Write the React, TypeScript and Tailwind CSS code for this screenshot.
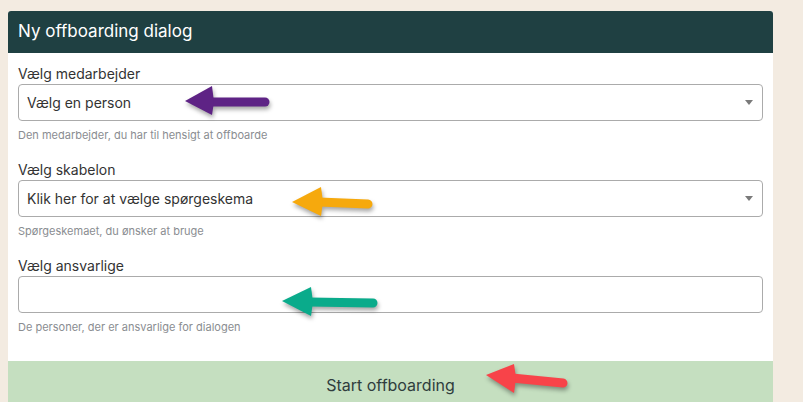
import React from "react";

type Arrow = {
  color: string;
  tip: [number, number];
  base: number; // x of head base
  top: number;
  bottom: number;
  tail: [number, number];
  baseY: number;
};

/* ────────── pil-annotation ────────── */
function ArrowMark({ a }: { a: Arrow }) {
  const shaftY = a.baseY;
  return (
    <svg
      className="absolute left-0 top-0 pointer-events-none"
      width={803}
      height={402}
      style={{ filter: "drop-shadow(1px 3px 2px rgba(0,0,0,0.35))" }}
    >
      <line
        x1={a.base - 2}
        y1={shaftY}
        x2={a.tail[0]}
        y2={a.tail[1]}
        stroke={a.color}
        strokeWidth={9}
        strokeLinecap="round"
      />
      <polygon
        points={`${a.tip[0]},${a.tip[1]} ${a.base},${a.top} ${a.base + 2},${shaftY} ${a.base},${a.bottom}`}
        fill={a.color}
      />
    </svg>
  );
}

const arrows: Arrow[] = [
  { color: "#5e2385", tip: [185, 101], base: 212, top: 86, bottom: 115, baseY: 102, tail: [265, 102] },
  { color: "#f6a90d", tip: [292, 202], base: 321, top: 187, bottom: 216, baseY: 202, tail: [368, 204] },
  { color: "#0aab8b", tip: [282, 301], base: 311, top: 287, bottom: 316, baseY: 302, tail: [373, 303] },
  { color: "#f84349", tip: [486, 375], base: 514, top: 364, bottom: 393, baseY: 378, tail: [563, 383] },
];

function Field({
  label,
  placeholder,
  help,
  select,
  className = "",
}: {
  label: string;
  placeholder?: string;
  help: string;
  select?: boolean;
  className?: string;
}) {
  return (
    <div className={className}>
      <div className="h-5 leading-5 text-[14px] text-[#333]">{label}</div>
      <div className="h-[37px] border border-[#ababab] rounded-[4px] flex items-center pl-2 pr-2 bg-white">
        <span className="flex-1 text-[14px] text-[#333]">{placeholder}</span>
        {select && (
          <span className="w-0 h-0 border-l-[4px] border-r-[4px] border-t-[5px] border-l-transparent border-r-transparent border-t-[#7a7a7a] mr-[1px]" />
        )}
      </div>
      <div className="mt-[6px] h-4 leading-4 text-[11px] text-[#8a8d91]">{help}</div>
    </div>
  );
}

export default function App() {
  return (
    <div
      className="relative w-[803px] h-[402px] overflow-hidden bg-[#f3ebe1] pt-[11px] pl-2"
      style={{ fontFamily: "Inter, 'Noto Sans', sans-serif" }}
    >
      <div className="w-[765px] bg-white rounded-t-[3px] overflow-hidden">
        <div className="h-[42px] bg-[#1f4042] px-[10px] flex items-center text-white text-[17px]">
          Ny offboarding dialog
        </div>
        <div className="px-[10px] pt-[11px] pb-[26px]">
          <Field label="Vælg medarbejder" placeholder="Vælg en person" help="Den medarbejder, du har til hensigt at offboarde" select />
          <Field className="mt-[17px]" label="Vælg skabelon" placeholder="Klik her for at vælge spørgeskema" help="Spørgeskemaet, du ønsker at bruge" select />
          <Field className="mt-[17px]" label="Vælg ansvarlige" help="De personer, der er ansvarlige for dialogen" />
        </div>
        <div className="h-[50px] bg-[#c5dfc0] flex justify-center pt-[12px] text-[16px] text-[#2f3d3d]">
          Start offboarding
        </div>
      </div>
      {arrows.map((a) => (
        <ArrowMark key={a.color} a={a} />
      ))}
    </div>
  );
}
